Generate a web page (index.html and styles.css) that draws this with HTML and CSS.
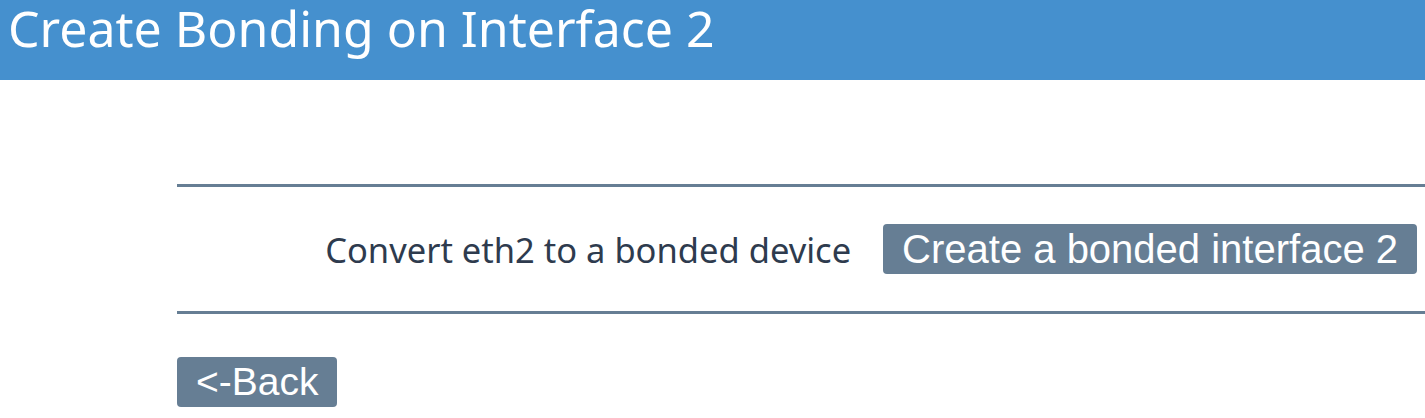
FILE: index.html
```html
<!DOCTYPE html>
<html lang="en">
<head>
    <meta charset="UTF-8">
    <meta name="viewport" content="width=device-width, initial-scale=1.0">
    <title>Create Bonding</title>
    <link rel="stylesheet" href="styles.css">
</head>
<body>

    <div class="header">
        <h1>Create Bonding on Interface 2</h1>
    </div>

    <div class="content">
        <div class="bond-row">
            <span class="label">Convert eth2 to a bonded device</span>
            <button class="btn">Create a bonded interface 2</button>
        </div>
        <button class="btn back">&lt;-Back</button>
    </div>

</body>
</html>
```

FILE: styles.css
```css
body {
    margin: 0;
    font-family: "Noto Sans", sans-serif;
    background: #fff;
    color: #2e3b4e;
}
.header {
    background-color: #4590ce;
    height: 80px;
    padding-left: 8px;
    box-sizing: border-box;
    overflow: hidden;
}
.header h1 {
    margin: -6px 0 0 0;
    color: #fff;
    font-weight: normal;
    font-size: 50px;
    line-height: normal;
}
.content {
    margin-left: 177px;
    padding-top: 104px;
}
.bond-row {
    display: flex;
    justify-content: flex-end;
    align-items: center;
    gap: 32px;
    padding: 37px 8px 37px 0;
    border-top: 3px solid #667e94;
    border-bottom: 3px solid #667e94;
}
.label {
    font-size: 34.5px;
}
.btn {
    font-family: "Liberation Sans", Arial, sans-serif;
    font-size: 40px;
    color: #fff;
    background-color: #667e94;
    border: none;
    border-radius: 4px;
    height: 50px;
    padding: 0 19px;
    cursor: pointer;
}
.back {
    font-size: 39px;
    margin-top: 43px;
}
```
